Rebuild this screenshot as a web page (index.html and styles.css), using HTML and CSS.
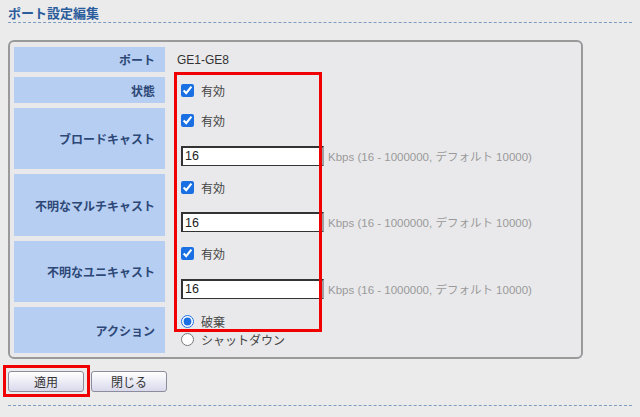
FILE: index.html
```html
<!DOCTYPE html>
<html lang="ja">

<head>
  <meta charset="UTF-8">
  <title>ポート設定編集</title>
  <link rel="stylesheet" href="styles.css">
</head>

<body>

  <div class="page">
    <h2 class="page-title">ポート設定編集</h2>

    <!-- Port settings -->
    <div class="panel">
      <div class="form-grid">

        <div class="cell-label">ポート</div>
        <div class="cell-value">GE1-GE8</div>

        <div class="cell-label">状態</div>
        <div class="cell-value">
          <label class="line"><input type="checkbox" checked> 有効</label>
        </div>

        <div class="cell-label">ブロードキャスト</div>
        <div class="cell-value">
          <label class="line"><input type="checkbox" checked> 有効</label>
          <div class="rate">
            <input type="text" value="16">
            <span class="hint">Kbps (16 - 1000000, デフォルト 10000)</span>
          </div>
        </div>

        <div class="cell-label">不明なマルチキャスト</div>
        <div class="cell-value">
          <label class="line"><input type="checkbox" checked> 有効</label>
          <div class="rate">
            <input type="text" value="16">
            <span class="hint">Kbps (16 - 1000000, デフォルト 10000)</span>
          </div>
        </div>

        <div class="cell-label">不明なユニキャスト</div>
        <div class="cell-value">
          <label class="line"><input type="checkbox" checked> 有効</label>
          <div class="rate">
            <input type="text" value="16">
            <span class="hint">Kbps (16 - 1000000, デフォルト 10000)</span>
          </div>
        </div>

        <div class="cell-label">アクション</div>
        <div class="cell-value">
          <label class="line"><input type="radio" name="action" checked> 破棄</label>
          <label class="line"><input type="radio" name="action"> シャットダウン</label>
        </div>

      </div>
    </div>

    <div class="actions">
      <button type="button" class="btn">適用</button>
      <button type="button" class="btn">閉じる</button>
    </div>

    <div class="page-foot"></div>

    <!-- highlight marks -->
    <div class="mark mark-fields"></div>
    <div class="mark mark-apply"></div>
  </div>

</body>

</html>
```

FILE: styles.css
```css
body {
  margin: 0;
  background: #ebebeb;
  font-family: "Liberation Sans", "Noto Sans CJK JP", sans-serif;
  font-size: 12px;
  color: #333;
}

.page {
  position: relative;
  padding: 0 8px;
  height: 417px;
  box-sizing: border-box;
}

.page-title {
  margin: 0;
  padding-top: 5px;
  height: 17px;
  font-size: 13px;
  line-height: 17px;
  font-weight: bold;
  color: #2b5c9c;
  border-bottom: 1px dashed #7d9cc0;
}

.panel {
  margin-top: 17px;
  width: 575px;
  box-sizing: border-box;
  padding: 5px 4px 4px 4px;
  border: 2px solid #9a9a9a;
  border-radius: 6px;
  background: #e9e9eb;
}

.form-grid {
  display: grid;
  grid-template-columns: 151px 1fr;
  grid-template-rows: 25px 26px 61px 62px 61px 46px;
  gap: 5px;
}

.cell-label {
  display: flex;
  align-items: center;
  justify-content: flex-end;
  padding-right: 10px;
  background: #b6cef2;
  color: #2d4877;
  font-weight: bold;
}

.cell-value {
  display: flex;
  flex-direction: column;
  justify-content: center;
  padding-left: 7px;
}

.line {
  display: flex;
  align-items: center;
  height: 18px;
  color: #444;
}

.cell-value .line + .rate {
  margin-top: 16px;
}

.line input {
  width: 13px;
  height: 13px;
  margin: 0 7px 0 4px;
  accent-color: #1a6fe3;
}

.rate {
  display: flex;
  align-items: center;
}

.rate input {
  width: 143px;
  height: 20px;
  box-sizing: border-box;
  margin: 0 0 0 4px;
  padding: 0 2px;
  border: 2px solid #333;
  border-right-color: #a0a0a0;
  border-bottom-width: 1px;
  background: #fff;
  font-family: "Liberation Sans", sans-serif;
  font-size: 12.5px;
  color: #222;
}

.hint {
  margin-left: 4px;
  font-size: 11.5px;
  color: #9a9a9a;
}

.actions {
  display: flex;
  gap: 7px;
  margin-top: 12px;
}

.btn {
  width: 76px;
  height: 21px;
  padding: 0;
  border: 1px solid #8c8c9c;
  border-radius: 3px;
  background: linear-gradient(#ffffff, #d9d9ec);
  font-family: "Liberation Sans", "Noto Sans CJK JP", sans-serif;
  font-size: 12px;
  color: #333;
}

.page-foot {
  margin-top: 13px;
  border-top: 1px dashed #7d9cc0;
}

.mark {
  position: absolute;
  box-sizing: border-box;
  border: 3px solid #f00000;
}

.mark-fields {
  left: 174px;
  top: 72px;
  width: 148px;
  height: 260px;
}

.mark-apply {
  left: 3px;
  top: 365px;
  width: 87px;
  height: 32px;
}
```
